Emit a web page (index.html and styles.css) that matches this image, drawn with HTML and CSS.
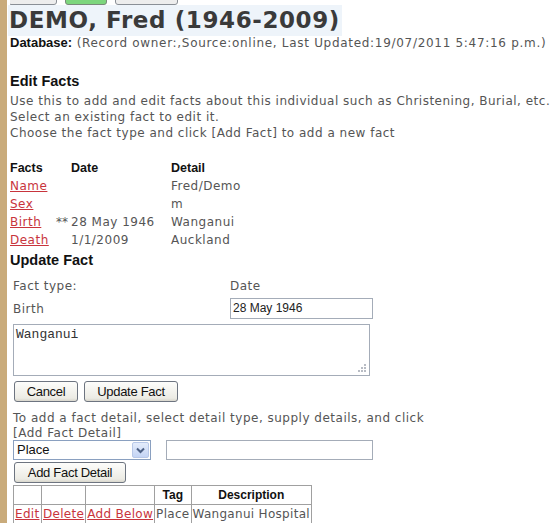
FILE: index.html
```html
<!DOCTYPE html>
<html lang="en">
<head>
  <meta charset="UTF-8" />
  <title>Edit Facts - DEMO, Fred</title>
  <link rel="stylesheet" href="styles.css">
</head>
<body>
  <div class="page">
    <div class="toolbar">
      <button class="tb tb-a"></button>
      <button class="tb tb-b"></button>
      <button class="tb tb-c"></button>
    </div>

    <h1 class="person">DEMO, Fred (1946-2009)</h1>
    <div class="db"><b>Database:</b> (Record owner:,Source:online, Last Updated:19/07/2011 5:47:16 p.m.)</div>

    <h2>Edit Facts</h2>
    <p class="intro">
      Use this to add and edit facts about this individual such as Christening, Burial, etc.<br>
      Select an existing fact to edit it.<br>
      Choose the fact type and click [Add Fact] to add a new fact
    </p>

    <table class="facts">
      <tr><th class="c1">Facts</th><th class="c2">Date</th><th>Detail</th></tr>
      <tr><td><a href="#">Name</a></td><td></td><td>Fred/Demo</td></tr>
      <tr><td><a href="#">Sex</a></td><td></td><td>m</td></tr>
      <tr><td><a href="#">Birth</a><span class="stars">**</span></td><td>28 May 1946</td><td>Wanganui</td></tr>
      <tr><td><a href="#">Death</a></td><td>1/1/2009</td><td>Auckland</td></tr>
    </table>

    <h2 class="update">Update Fact</h2>
    <div class="fact-form">
      <span>Fact type:</span>
      <span>Date</span>
      <span>Birth</span>
      <input class="field date" type="text" value="28 May 1946">
    </div>
    <div class="place-wrap">
      <textarea class="place">Wanganui</textarea>
      <svg class="grip" width="9" height="9" viewBox="0 0 9 9">
        <g fill="#b8bcc4">
          <rect x="6" y="0" width="2" height="2"/>
          <rect x="3" y="3" width="2" height="2"/>
          <rect x="6" y="3" width="2" height="2"/>
          <rect x="0" y="6" width="2" height="2"/>
          <rect x="3" y="6" width="2" height="2"/>
          <rect x="6" y="6" width="2" height="2"/>
        </g>
      </svg>
    </div>
    <div class="actions">
      <button class="btn">Cancel</button>
      <button class="btn">Update Fact</button>
    </div>

    <p class="hint">To add a fact detail, select detail type, supply details, and click<br>[Add Fact Detail]</p>
    <div class="detail-row">
      <div class="select">
        <span class="select-text">Place</span>
        <span class="select-arrow">
          <svg width="15" height="16" viewBox="0 0 15 16">
            <path d="M4 6.5 L7.5 10 L11 6.5" fill="none" stroke="#4d6185" stroke-width="2"/>
          </svg>
        </span>
      </div>
      <input class="field detail" type="text">
    </div>
    <button class="btn add">Add Fact Detail</button>

    <table class="details">
      <tr><th class="d1"></th><th class="d2"></th><th class="d3"></th><th>Tag</th><th>Description</th></tr>
      <tr><td><a href="#">Edit</a></td><td><a href="#">Delete</a></td><td><a href="#">Add Below</a></td><td>Place</td><td>Wanganui Hospital</td></tr>
    </table>
  </div>
</body>
</html>
```

FILE: styles.css
```css
* { box-sizing: border-box; }

body {
  margin: 0;
  background: #fff;
  font-family: "DejaVu Sans", Verdana, sans-serif;
  font-size: 12px;
  letter-spacing: 0.5px;
  color: #555;
}

.page {
  border-left: 7px solid #c9ab7b;
  min-height: 523px;
  padding-left: 3px;
}

.toolbar {
  display: flex;
  align-items: flex-end;
  height: 5px;
  overflow: hidden;
  gap: 8px;
}

.tb {
  height: 20px;
  border: 1px solid #8a8f96;
  border-radius: 3px;
  background: #ededed;
  padding: 0;
}
.tb-a { width: 49px; margin-left: -2px; }
.tb-b { width: 42px; background: #7dd67d; border-color: #7a8a7a; }
.tb-c { width: 63px; }

h1.person {
  display: inline-block;
  margin: 0 0 0 -2px;
  padding: 0 2px 0 1px;
  height: 31px;
  line-height: 31px;
  background: #eef4fa;
  font-family: "DejaVu Sans", Verdana, sans-serif;
  font-size: 23px;
  letter-spacing: 0.6px;
  font-weight: bold;
  color: #3a3a3a;
}

.db {
  line-height: 14px;
  letter-spacing: 0.7px;
}
.db b {
  font-family: "Liberation Sans", Arial, sans-serif;
  font-size: 13px;
  letter-spacing: 0;
  color: #111;
}

h2 {
  margin: 23px 0 0;
  font-family: "Liberation Sans", Arial, sans-serif;
  font-size: 14.5px;
  letter-spacing: 0;
  line-height: 16px;
  color: #111;
}

.intro {
  margin: 4px 0 0;
  line-height: 16px;
}

.facts {
  border-collapse: collapse;
  margin-top: 18px;
}
.facts th, .facts td {
  padding: 0;
  height: 18px;
  line-height: 18px;
  text-align: left;
  vertical-align: middle;
}
.facts th {
  font-family: "Liberation Sans", Arial, sans-serif;
  font-size: 12.5px;
  letter-spacing: 0;
  color: #111;
}
.facts .c1 { width: 61px; }
.facts .c2 { width: 100px; }
.stars { float: right; margin-right: 3px; letter-spacing: 0; }

a { color: #c8343c; }

h2.update { margin-top: 3px; }

.fact-form {
  display: grid;
  grid-template-columns: 217px 143px;
  grid-template-rows: 20px 24px;
  align-items: center;
  margin-top: 8px;
  padding-left: 3px;
}
.fact-form span { line-height: 14px; }
.fact-form span:nth-child(3) { padding-top: 2px; }

.field {
  border: 1px solid #a4acb8;
  font-family: "Liberation Sans", Arial, sans-serif;
  font-size: 12px;
  letter-spacing: 0;
  color: #222;
  padding: 0 2px;
  background: #fff;
  outline: none;
}
.date { width: 143px; height: 21px; }

.place-wrap {
  position: relative;
  width: 357px;
  margin: 4px 0 0 3px;
}
.place {
  display: block;
  width: 357px;
  height: 52px;
  border: 1px solid #a4acb8;
  font-family: "Liberation Mono", "Courier New", monospace;
  font-size: 13px;
  line-height: 15px;
  letter-spacing: 0;
  color: #333;
  padding: 2px 2px;
  resize: none;
}
.grip {
  position: absolute;
  right: 3px;
  bottom: 3px;
}

.btn {
  font-family: "Liberation Sans", Arial, sans-serif;
  font-size: 13px;
  color: #111;
  height: 21px;
  padding: 0 7px;
  border: 1px solid #6d7480;
  border-radius: 3px;
  background: linear-gradient(#fdfdfb, #ecebe4 85%, #d8d6cc);
  letter-spacing: -0.3px;
}

.actions {
  display: flex;
  gap: 6px;
  margin: 5px 0 0 4px;
}
.actions .btn:first-child { width: 64px; }
.actions .btn:last-child { width: 94px; }

.hint {
  margin: 9px 0 0 3px;
  line-height: 15px;
}

.detail-row {
  display: flex;
  gap: 15px;
  margin: -1px 0 0 3px;
}

.select {
  display: flex;
  width: 138px;
  height: 20px;
  border: 1px solid #8aa0c0;
  background: #fff;
  font-family: "Liberation Sans", Arial, sans-serif;
  font-size: 13px;
  letter-spacing: 0;
  color: #111;
}
.select-text { flex: 1; padding-left: 3px; line-height: 18px; }
.select-arrow {
  width: 17px;
  margin: 1px;
  border: 1px solid #b8c8e8;
  border-radius: 2px;
  background: linear-gradient(#e4ecfb, #c4d4f4);
  display: flex;
  align-items: center;
  justify-content: center;
}

.detail { width: 207px; height: 20px; }

.btn.add {
  display: block;
  width: 112px;
  margin: 2px 0 0 4px;
  padding: 0;
}

.details {
  border-collapse: collapse;
  margin: 2px 0 0 3px;
}
.details th, .details td {
  border: 1px solid #a0a0a0;
  padding: 0 1px;
  height: 19px;
  white-space: nowrap;
}
.details th {
  font-family: "Liberation Sans", Arial, sans-serif;
  font-size: 12px;
  letter-spacing: 0;
  color: #111;
  text-align: center;
}
.details td { letter-spacing: 0.3px; }
.details .d1 { width: 28px; }
.details .d2 { width: 44px; }
.details .d3 { width: 68px; }
```
